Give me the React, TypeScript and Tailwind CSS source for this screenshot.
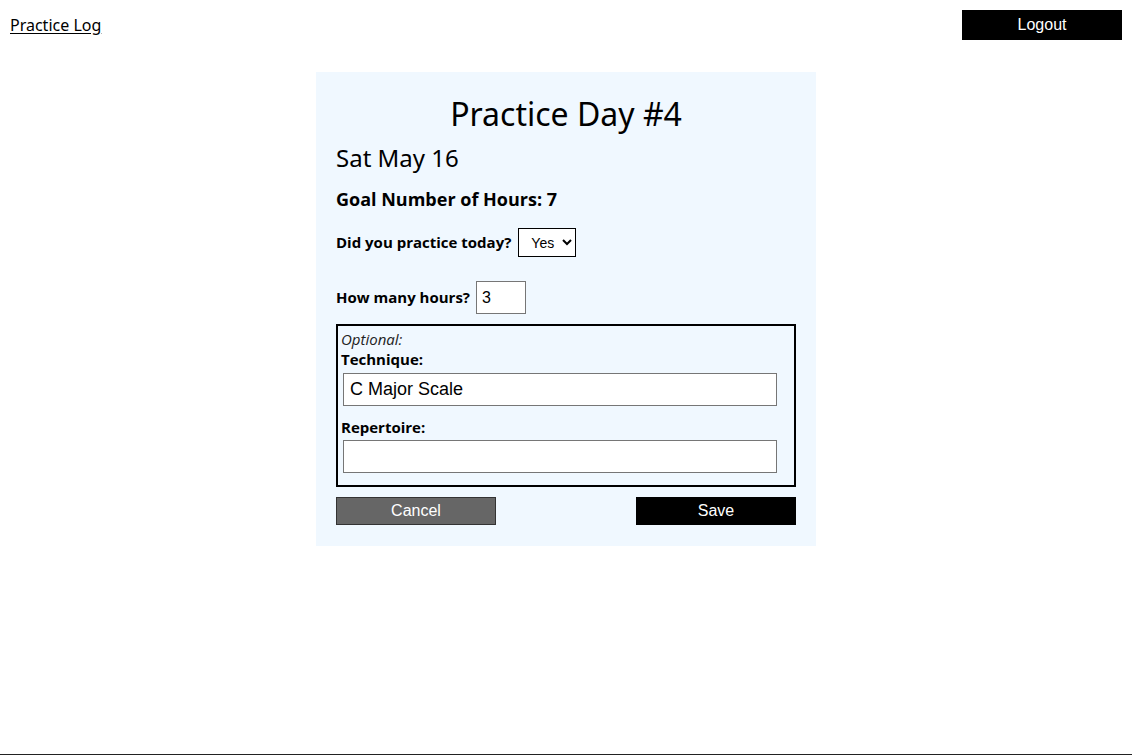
import React from "react";

export default function App() {
  const hand = { fontFamily: '"Noto Sans", "Open Sans", sans-serif' };
  return (
    <div className="relative min-h-[755px] w-full bg-white border-b border-[#222]" style={{ fontFamily: '"Open Sans", "Noto Sans", sans-serif' }}>
      <header className="flex items-start justify-between px-[10px] pt-[10px]">
        <a href="#" className="mt-[4px] text-[16px] leading-[22px] text-black underline underline-offset-2" style={hand}>
          Practice Log
        </a>
        <button className="h-[30px] w-[160px] bg-black text-[16px] text-white" style={{ fontFamily: '"Liberation Sans", Arial, sans-serif' }}>
          Logout
        </button>
      </header>
      <main className="mt-[32px] flex justify-center">
        <div className="w-[500px] bg-[#f0f8ff] px-[20px] pt-[20px] pb-[21px] text-black">
          <h1 className="text-center text-[32px] leading-[44px]" style={hand}>
            Practice Day #4
          </h1>
          <h2 className="mt-[4px] text-[24px] leading-[36px]" style={hand}>
            Sat May 16
          </h2>
          <p className="mt-[10px] text-[18px] font-bold leading-[26px]">Goal Number of Hours: 7</p>
          <div className="mt-[16px] flex h-[29px] items-center">
            <label className="text-[15px] font-bold">Did you practice today?</label>
            <select
              defaultValue="Yes"
              className="ml-[7px] h-[29px] w-[58px] border border-black bg-white pl-[8px] text-[14px]"
              style={{ fontFamily: '"Liberation Sans", Arial, sans-serif' }}
            >
              <option>Yes</option>
              <option>No</option>
            </select>
          </div>
          <div className="mt-[24px] flex h-[33px] items-center">
            <label className="text-[15px] font-bold">How many hours?</label>
            <input
              defaultValue="3"
              className="ml-[6px] h-[33px] w-[50px] border border-[#767676] bg-white px-[5px] text-[16px]"
              style={{ fontFamily: '"Liberation Sans", Arial, sans-serif' }}
            />
          </div>
          <fieldset className="mt-[10px] h-[163px] border-2 border-black px-[3px] pt-[3px]">
            <div className="text-[15px] italic leading-[20px] text-[#222]">Optional:</div>
            <div className="text-[15px] font-bold leading-[20px]">Technique:</div>
            <input
              defaultValue="C Major Scale"
              className="mt-[4px] ml-[2px] h-[33px] w-[434px] border border-[#767676] bg-white px-[6px] text-[18px]"
              style={{ fontFamily: '"Liberation Sans", Arial, sans-serif' }}
            />
            <div className="mt-[11px] text-[15px] font-bold leading-[20px]">Repertoire:</div>
            <input
              className="mt-[3px] ml-[2px] h-[33px] w-[434px] border border-[#767676] bg-white px-[6px] text-[18px]"
              style={{ fontFamily: '"Liberation Sans", Arial, sans-serif' }}
            />
          </fieldset>
          <div className="mt-[10px] flex justify-between" style={{ fontFamily: '"Liberation Sans", Arial, sans-serif' }}>
            <button className="h-[28px] w-[160px] border border-[#333] bg-[#666] text-[16px] text-white">Cancel</button>
            <button className="h-[28px] w-[160px] bg-black text-[16px] text-white">Save</button>
          </div>
        </div>
      </main>
    </div>
  );
}
